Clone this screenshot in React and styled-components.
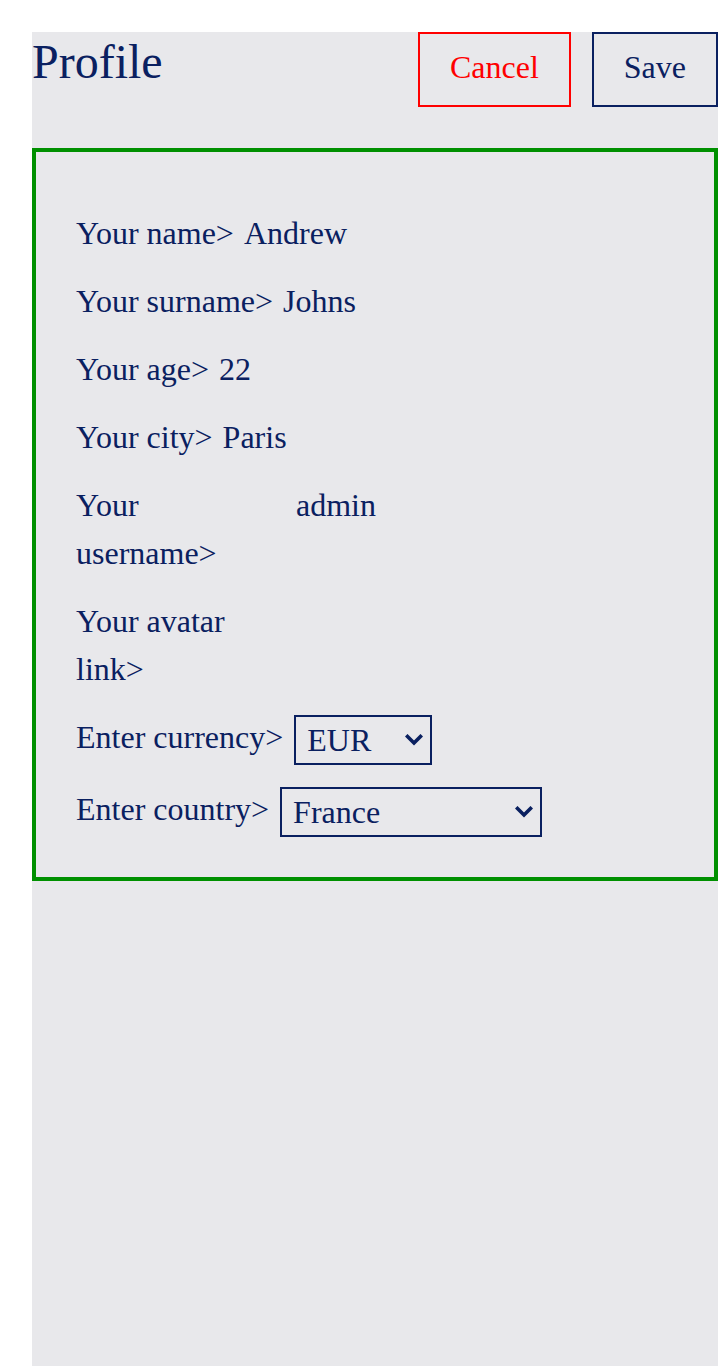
import React, { useState } from "react";
import styled, { createGlobalStyle } from "styled-components";

const GlobalStyle = createGlobalStyle`
  html, body {
    margin: 0;
    padding: 0;
    background: #ffffff;
  }
  body {
    padding: 32px 0 0 32px;
    font-family: "Liberation Serif", "Times New Roman", serif;
    color: #0a2060;
  }
`;

// Gray page area
const Page = styled.div`
  background: #e8e8eb;
  min-height: calc(100vh - 32px);
  box-sizing: border-box;
`;

const Header = styled.header`
  display: flex;
  justify-content: space-between;
  align-items: flex-start;
  margin-bottom: 41px;
`;

const Title = styled.h1`
  margin: 0;
  font-size: 48px;
  font-weight: normal;
  line-height: 1.25;
  color: #0a2060;
`;

const Actions = styled.div`
  display: flex;
  gap: 21px;
`;

const ActionButton = styled.button`
  font-family: "Liberation Serif", "Times New Roman", serif;
  font-size: 32px;
  height: 75px;
  padding: 0 30px 4px;
  background: transparent;
  border: 2px solid ${(p) => (p.$danger ? "#ff0000" : "#0a2060")};
  color: ${(p) => (p.$danger ? "#ff0000" : "#0a2060")};
  cursor: pointer;
`;

// Green framed form
const Form = styled.form`
  border: 4px solid #009000;
  padding: 57px 40px 40px;
  display: flex;
  flex-direction: column;
  gap: 20px;
`;

const Row = styled.div`
  display: flex;
  align-items: flex-start;
  gap: 10px;
  font-size: 32px;
  line-height: 48px;
`;

const Label = styled.span`
  max-width: 210px;
`;

const Value = styled.span``;

const SelectWrap = styled.div`
  position: relative;
  margin: 2px 0 0 1px;
  width: ${(p) => p.$width}px;
`;

const Select = styled.select`
  appearance: none;
  -webkit-appearance: none;
  display: block;
  width: 100%;
  box-sizing: border-box;
  font-family: "Liberation Serif", "Times New Roman", serif;
  font-size: 32px;
  color: #0a2060;
  background: transparent;
  border: 2px solid #0a2060;
  border-radius: 0;
  height: 50px;
  padding: 0 36px 0 11px;
  outline: none;
`;

const Chevron = styled.svg`
  position: absolute;
  right: 9px;
  top: 50%;
  transform: translateY(-50%);
  pointer-events: none;
`;

const ChevronIcon = () => (
  <Chevron width="18" height="12" viewBox="0 0 18 12">
    <polyline
      points="2.5,2.5 9,9 15.5,2.5"
      fill="none"
      stroke="#0a2060"
      strokeWidth="3.6"
      strokeLinecap="square"
    />
  </Chevron>
);

const fields = [
  { label: "Your name>", value: "Andrew" },
  { label: "Your surname>", value: "Johns" },
  { label: "Your age>", value: "22" },
  { label: "Your city>", value: "Paris" },
  { label: "Your username>", value: "admin" },
  { label: "Your avatar link>", value: "" },
];

export default function App() {
  const [currency, setCurrency] = useState("EUR");
  const [country, setCountry] = useState("France");

  return (
    <>
      <GlobalStyle />
      <Page>
        <Header>
          <Title>Profile</Title>
          <Actions>
            <ActionButton $danger>Cancel</ActionButton>
            <ActionButton>Save</ActionButton>
          </Actions>
        </Header>
        <Form onSubmit={(e) => e.preventDefault()}>
          {fields.map((f) => (
            <Row key={f.label}>
              <Label>{f.label}</Label>
              {f.value && <Value>{f.value}</Value>}
            </Row>
          ))}
          <Row>
            <Label>Enter currency&gt;</Label>
            <SelectWrap $width={138}>
              <Select value={currency} onChange={(e) => setCurrency(e.target.value)}>
                <option>EUR</option>
                <option>USD</option>
                <option>GBP</option>
              </Select>
              <ChevronIcon />
            </SelectWrap>
          </Row>
          <Row>
            <Label>Enter country&gt;</Label>
            <SelectWrap $width={262}>
              <Select value={country} onChange={(e) => setCountry(e.target.value)}>
                <option>France</option>
                <option>Germany</option>
                <option>United Kingdom</option>
              </Select>
              <ChevronIcon />
            </SelectWrap>
          </Row>
        </Form>
      </Page>
    </>
  );
}
